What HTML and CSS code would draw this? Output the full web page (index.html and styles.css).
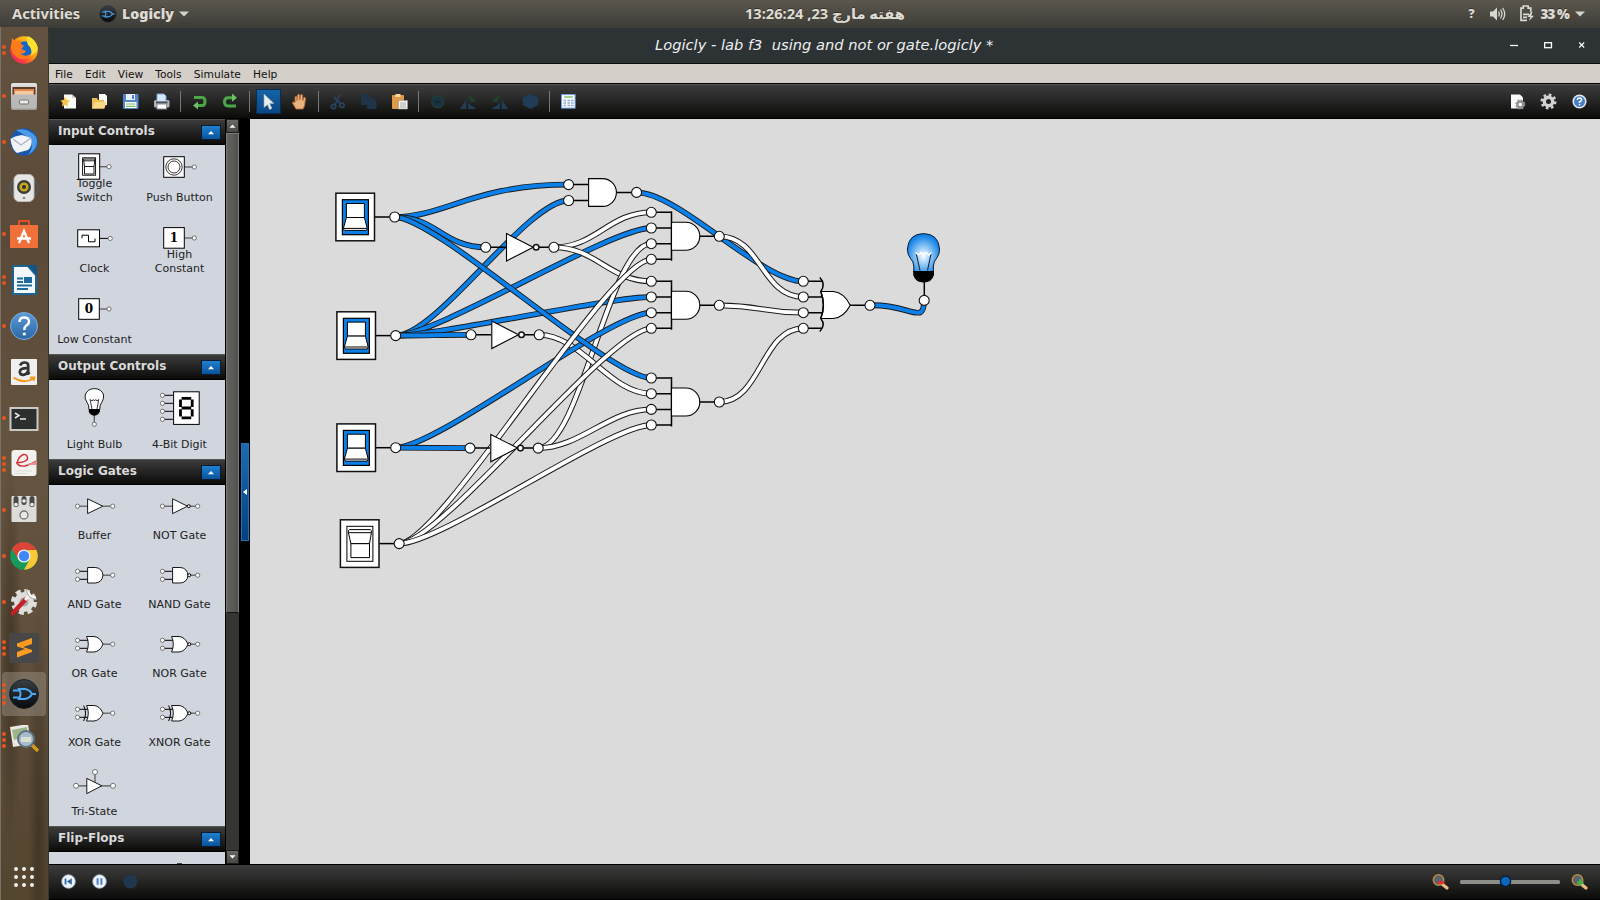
FILE: index.html
```html
<!DOCTYPE html>
<html lang="en">
<head>
<meta charset="utf-8">
<title>Logicly - lab f3  using and not or gate.logicly *</title>
<link rel="stylesheet" href="styles.css">
</head>
<body>
<svg class="defs" width="0" height="0">
  <defs>
    <linearGradient id="gDark" x1="0" y1="0" x2="0" y2="1"><stop offset="0" stop-color="#3b4045"/><stop offset="1" stop-color="#07090c"/></linearGradient>
    <linearGradient id="gFox" x1="1" y1="0" x2="0" y2="1"><stop offset="0" stop-color="#fff23a"/><stop offset=".45" stop-color="#ff980e"/><stop offset=".75" stop-color="#ff3647"/><stop offset="1" stop-color="#e31587"/></linearGradient>
    <linearGradient id="gMetal" x1="0" y1="0" x2="0" y2="1"><stop offset="0" stop-color="#e4e4e2"/><stop offset="1" stop-color="#9a9a98"/></linearGradient>
    <linearGradient id="gSky" x1="0" y1="0" x2="0" y2="1"><stop offset="0" stop-color="#5a9bd8"/><stop offset="1" stop-color="#2b66a4"/></linearGradient>
    <radialGradient id="gBulb" cx=".5" cy=".58" r=".6"><stop offset="0" stop-color="#fff"/><stop offset=".25" stop-color="#b9dcfa"/><stop offset=".85" stop-color="#1a86e8"/><stop offset="1" stop-color="#0a7fe6"/></radialGradient>
    <g id="logo">
      <circle r="14.5" fill="url(#gDark)" stroke="#1b232b"/>
      <path d="M-5-5H1Q6-4 8 0Q6 4 1 5H-5Q-2 0-5-5ZM8 0H12M-11-3.5H-4M-11 3.5H-4" fill="none" stroke="#4aa8f5" stroke-width="2"/>
    </g>
    <g id="toggle">
      <path d="M-20 0H-5" class="ln"/>
      <rect x="-58.8" y="-23.8" width="38.6" height="47.6" class="part"/>
      <rect x="-52.3" y="-17.3" width="26" height="35" class="well"/>
      <path d="M-48.3-13.5h18V.5h-18Z" class="rock"/>
      <path d="M-48.3 .5h18L-27.5 11.3V12L-28.6 13.4H-50L-51.3 12V11.3Z M-51 11.4H-27.8" class="rock"/>
      <circle r="5" class="pin"/>
    </g>
    <g id="toggleOff">
      <path d="M-20 0H-5" class="ln"/>
      <rect x="-58.8" y="-23.8" width="38.6" height="47.6" class="part"/>
      <rect x="-52.3" y="-17.3" width="26" height="35" class="rock"/>
      <path d="M-48.3 0h18.6V14h-18.6Z" class="rock"/>
      <path d="M-48.3 0h18.6L-27.8-10.8V-13L-29-14H-49.5L-50.8-13V-10.8ZM-50.6-10.9H-28" class="rock"/>
      <circle r="5" class="pin"/>
    </g>
    <g id="not">
      <path d="M0 0H20M50 0H68" class="ln"/>
      <path d="M20.8-13.7L47.5 0L20.8 13.7Z" class="thin"/>
      <circle cx="50.5" r="2.8" class="part"/>
      <circle r="5" class="pin"/><circle cx="68.2" r="5" class="pin"/>
    </g>
    <g id="and4">
      <path d="M0-24H20M0-8.3H20M0 7.4H20M0 23H20M20.2-25V24.5M48 0H68" class="ln"/>
      <path d="M20.2-14H34.5A14 14 0 0 1 34.5 14H20.2Z" class="thin"/>
      <circle cy="-24" r="5" class="pin"/><circle cy="-8.3" r="5" class="pin"/><circle cy="7.4" r="5" class="pin"/><circle cy="23" r="5" class="pin"/>
      <circle cx="68" r="5" class="pin"/>
    </g>
    <!-- palette pieces -->
    <g id="in2"><path d="M25.5 21.3H37M25.5 29.3H37" class="ln2"/><circle cx="25.5" cy="21.3" r="2.1" class="dot"/><circle cx="25.5" cy="29.3" r="2.1" class="dot"/></g>
    <g id="out"><path d="M50.5 25.2H60" class="ln3"/><circle cx="60.7" cy="25.2" r="2.1" class="dot"/></g>
    <path id="orBody" d="M34.6 17.5H42Q48 18 51 25.2Q48 32.5 42 33H34.6Q38 25 34.6 17.5Z" class="sh"/>
    <path id="up" d="M-3 1.8L0-1.6L3 1.8Z" fill="#fff"/>
  </defs>
</svg>

<header class="topbar">
  <span class="tb-act">Activities</span>
  <span class="tb-app"><svg width="18" height="18" viewBox="-16 -16 32 32"><use href="#logo"/></svg><b>Logicly</b><svg width="10" height="6" viewBox="0 0 10 6"><path d="M0 .5H10L5 5.5Z" fill="#d5d3cd"/></svg></span>
  <span class="tb-clock" dir="rtl" lang="ur">هفته مارچ 23, 13:26:24</span>
  <span class="tb-sys">
    <b class="q">?</b>
    <svg width="16" height="14" viewBox="0 0 16 14"><path d="M0 4.5H3L7 .5V13.5L3 9.5H0Z" fill="#dad8d2"/><path d="M8.5 4.5Q10 7 8.5 9.5M10.5 2.5Q13.4 7 10.5 11.5M12.7 1Q16.7 7 12.7 13" fill="none" stroke="#dad8d2" stroke-width="1.3"/></svg>
    <svg class="batt" width="15" height="17" viewBox="0 0 15 17"><path d="M7 15.3H1V3.2H3.2V1H8.2V3.2H10.8V7M3 9.3H9M3 12.3H7" fill="none" stroke="#dad8d2" stroke-width="1.7"/><path d="M11 7L7.5 12H10.3L9 16L14 10.8H11.2L12.5 7Z" fill="#dad8d2"/></svg>
    <b class="pct">33 %</b>
    <svg width="10" height="6" viewBox="0 0 10 6"><path d="M0 .5H10L5 5.5Z" fill="#d5d3cd"/></svg>
  </span>
</header>

<div class="desk">
<nav class="dock">
  <div class="app"><i class="pips"><i></i><i></i></i><svg viewBox="-15 -15 30 30"><circle r="13.8" fill="url(#gFox)"/><circle cx="1" cy="-1" r="7.8" fill="#1666c8"/><path d="M-13-3L-12-12L-8-8L-4-10L-3-6L0-4L-3-1L2 1Q0 5-4 3Q0 8 7 4Q2 11-6 8Q-13 4-13-3Z" fill="#ff7a18"/><path d="M4-14Q1-7 6-3Q9 2 6 6Q14 3 13.6-3Q11-11 4-14Z" fill="#ffe02e"/></svg></div>
  <div class="app"><i class="pips"><i></i></i><svg viewBox="-15 -15 30 30"><rect x="-13" y="-13" width="26" height="27" rx="2" fill="url(#gMetal)"/><rect x="-11.5" y="-9" width="23" height="8" fill="#5b3a28"/><path d="M-10-7H10V-1H-10Z" fill="#e08a50"/><path d="M-9-5H9V-1H-9Z" fill="#f3c9a0"/><rect x="-12" y="-1.5" width="24" height="14" fill="#b9b9b7"/><rect x="-4.5" y="4" width="9" height="4" rx="1" fill="#e8e8e6" stroke="#777"/></svg></div>
  <div class="app"><i class="pips"><i></i></i><svg viewBox="-15 -15 30 30"><circle r="13.8" fill="#1b58ad"/><path d="M-8-12Q4-15 12-5Q16 6 4 13Q12 2 4-4Q-2-9-8-12Z" fill="#4a9be8"/><path d="M-13.5-3Q-10-6-2-7L7-4Q9 4 4 8L-7 11Q-12 8-13.5-3Z" fill="#f2f4f7"/><path d="M-11-3L-3 3L7-4" fill="none" stroke="#a9b4c4" stroke-width="1.3"/></svg></div>
  <div class="app"><svg viewBox="-15 -15 30 30"><path d="M-12-7Q-16 0-12 7M12-7Q16 0 12 7" stroke="#4b5962" stroke-width="2" fill="none"/><rect x="-10" y="-13.5" width="20" height="27" rx="5" fill="#e6e6e2" stroke="#bbb"/><circle cy="-1" r="7" fill="#3b3b38"/><circle cy="-1" r="4.6" fill="#c9a81e"/><circle cy="-1" r="2" fill="#2d2d2b"/><circle cy="10" r="1.3" fill="#888"/></svg></div>
  <div class="app"><i class="pips"><i></i></i><svg viewBox="-15 -15 30 30"><path d="M-5-9V-13H5V-9" fill="none" stroke="#e04f28" stroke-width="2"/><path d="M-14-9H14V13Q14 14 13 14H-13Q-14 14-14 13Z" fill="#f0703a"/><path d="M-5 9L0-3L5 9M-7 4.5H7" fill="none" stroke="#fff" stroke-width="2.3"/></svg></div>
  <div class="app"><i class="pips"><i></i><i></i></i><svg viewBox="-15 -15 30 30"><path d="M-11-14H4L12-5V14H-11Z" fill="#f5f8fa" stroke="#1a6496" stroke-width="2"/><path d="M4-15H13V-5Z" fill="#0f5484"/><path d="M-7-1.5H-1M-7 2H-1M-7 5.5H8M-7 9H4" stroke="#1d6a9c" stroke-width="1.8"/><rect x="0" y="-3" width="8" height="6" fill="#1d6a9c"/></svg></div>
  <div class="app"><i class="pips"><i></i></i><svg viewBox="-15 -15 30 30"><circle r="13.5" fill="url(#gSky)" stroke="#7aaede"/><path d="M-4.5-4Q-4.5-8.5 0-8.5Q5-8.5 5-4.5Q5-2 2-.2Q.3 1 .3 4" fill="none" stroke="#fff" stroke-width="2.4"/><circle cx=".3" cy="8" r="1.6" fill="#fff"/></svg></div>
  <div class="app"><svg viewBox="-15 -15 30 30"><rect x="-13" y="-13" width="26" height="26" rx="1" fill="#efefef"/><path d="M-3.8-6.5Q-2.8-9.7 1-9.5Q4.5-9.3 4.2-6V-.5Q4.3 1 5.5 2.2M3.6-3.8Q-4.3-4-4.2-.2Q-3.9 3-.7 2.8Q2.8 2.6 4-.8" fill="none" stroke="#333" stroke-width="2.7"/><path d="M-10.5 5.5Q0 12.5 9.5 6.5M6 5.5H10.5L9.5 9" fill="none" stroke="#f79a1c" stroke-width="1.8"/></svg></div>
  <div class="app"><i class="pips"><i></i></i><svg viewBox="-15 -16 30 30"><rect x="-13.5" y="-11" width="27" height="22" fill="#2c2f2e" stroke="#c9c9c5" stroke-width="2"/><path d="M-9-6L-5-3.5L-9-1M-4 0H2" fill="none" stroke="#e8e8e8" stroke-width="1.5"/></svg></div>
  <div class="app"><i class="pips"><i></i><i></i><i></i></i><svg viewBox="-15 -15 30 30"><rect x="-12.5" y="-14" width="25" height="26" rx="3" fill="#f3f2ef"/><path d="M-8-1Q6-2 3-8Q0-12-5-6Q-10 3 1 2Q8 0 12-3" fill="none" stroke="#d8232a" stroke-width="1.4"/><path d="M-3 2Q6 0 12-3V1Q4 0-3 2Z" fill="#f08a8c"/><path d="M-9 7H8M-9 9.5H3" stroke="#ddd"/></svg></div>
  <div class="app"><i class="pips"><i></i></i><svg viewBox="-15 -15 30 30"><rect x="-12.5" y="-14" width="25" height="26" rx="1" fill="#dcdcd8"/><g fill="#4a4a48"><rect x="-10.5" y="-14" width="5" height="11" rx="2.5"/><rect x="-2.5" y="-14" width="5" height="9" rx="2.5"/><rect x="5.5" y="-14" width="5" height="11" rx="2.5"/></g><g fill="#eee"><circle cx="-8" cy="-5.5" r="1.8"/><circle cy="-9" r="1.8"/><circle cx="8" cy="-5.5" r="1.8"/></g><circle cy="5" r="4" fill="#e8e8e6" stroke="#777" stroke-width="1.3"/></svg></div>
  <div class="app"><i class="pips"><i></i></i><svg viewBox="-15 -15 30 30"><circle r="13.8" fill="#159a5b"/><path d="M-12-7A13.8 13.8 0 0 1 12.4-6H0L-6 3Z" fill="#db4437"/><path d="M12.4-6A13.8 13.8 0 0 1 0 13.8L6 3L4-6Z" fill="#fcc934"/><circle r="6.6" fill="#f1f1f1"/><circle r="5.2" fill="#4285f4"/></svg></div>
  <div class="app"><i class="pips"><i></i></i><svg viewBox="-15 -15 30 30"><circle r="10" fill="#deddda"/><circle r="11" fill="none" stroke="#deddda" stroke-width="4" stroke-dasharray="5 3.64"/><circle r="4.5" fill="#aaa9a6"/><path d="M-11 11L1-2" stroke="#c3202a" stroke-width="4.5" stroke-linecap="round"/><path d="M1-2L6-7M4-11Q5-4 12-4" stroke="#f4f4f2" stroke-width="3" fill="none"/><path d="M2.5-12Q3.5-3 13-2.5" stroke="#999" stroke-width=".8" fill="none"/></svg></div>
  <div class="app"><i class="pips"><i></i><i></i><i></i></i><svg viewBox="-15 -15 30 30"><rect x="-15" y="-15" width="30" height="30" rx="2" fill="#474747"/><path d="M-7-4.5L8-10V-4L-1-1L8 2V4L-7 9.5V4L1 1L-7-1.5Z" fill="#ff9b21"/></svg></div>
  <div class="app active"><i class="pips"><i></i><i></i><i></i><i></i></i><svg viewBox="-15 -15 30 30"><use href="#logo"/></svg></div>
  <div class="app"><i class="pips"><i></i><i></i><i></i></i><svg viewBox="-15 -13 30 30"><path d="M-14-11L4-14L7 6L-11 9Z" fill="#e9e9e4"/><path d="M-12-8L3-11L4-3L-10 2Z" fill="#9db489"/><path d="M8 7L14 13" stroke="#d29a1d" stroke-width="3.5"/><circle cx="2" cy="1" r="8" fill="#a7bccb" stroke="#5f7180" stroke-width="2"/><path d="M-3-1H7V4H-3Z" fill="#d8e0d0"/></svg></div>
  <div class="grid-btn"><i></i><i></i><i></i><i></i><i></i><i></i><i></i><i></i><i></i></div>
</nav>

<main class="window">
  <div class="title"><span class="title-text">Logicly - lab f3  using and not or gate.logicly *</span>
    <svg class="wm" width="80" height="12" viewBox="0 0 80 12"><path d="M1 6.5H9" stroke="#fff" stroke-width="1.3"/><rect x="35.7" y="3.7" width="6.8" height="5" fill="none" stroke="#fff" stroke-width="1.3"/><path d="M70.2 3.5L75.2 8.5M75.2 3.5L70.2 8.5" stroke="#fff" stroke-width="1.1"/></svg>
  </div>
  <div class="menu"><span>File</span><span>Edit</span><span>View</span><span>Tools</span><span>Simulate</span><span>Help</span></div>
  <div class="toolbar">
    <svg class="t" viewBox="0 0 25 25"><path d="M8 5.5H16L20 9V19.5H8Z" fill="#fbfbf6"/><path d="M16 5.5V9H20Z" fill="#d0d0c8"/><path d="M9 7.5L10.5 11L14 11.5L11.5 14L12 17.5L9 15.8L6 17.5L6.5 14L4.5 11.5L7.5 11Z" fill="#f5c242"/></svg>
    <svg class="t" viewBox="0 0 25 25"><path d="M12 5H18L20 7V16H12Z" fill="#fbfbf6"/><path d="M5 9H10L11 11H17V19.5H5Z" fill="#eebc55"/><path d="M5 19.5L8 13H19.5L17.5 19.5Z" fill="#f8d988"/></svg>
    <svg class="t" viewBox="0 0 25 25"><rect x="5" y="5" width="15.5" height="15" rx="1" fill="#5284c8"/><rect x="8" y="5" width="9" height="6" fill="#e6eefa"/><rect x="14" y="6" width="2" height="4" fill="#5284c8"/><rect x="7" y="13" width="11.5" height="6" fill="#fff"/><path d="M8 15H17.5M8 17.3H17.5" stroke="#7dbb6c" stroke-width="1.2"/></svg>
    <svg class="t" viewBox="0 0 25 25"><rect x="5" y="11" width="15.5" height="7.5" rx="1.5" fill="#aeb4ba"/><path d="M8 5H15L17 7V13H8Z" fill="#d4e8fb" stroke="#7fa9d6"/><rect x="7" y="12.5" width="11.5" height="2" fill="#4d5358"/><rect x="8" y="15" width="9.5" height="5" fill="#fff" stroke="#8a8f94"/></svg>
    <i class="sep"></i>
    <svg class="t" viewBox="0 0 25 25"><path d="M7 8.5H15Q18 8.5 18 12.5Q18 16.5 15 16.5H10" fill="none" stroke="#4ba648" stroke-width="3"/><path d="M11 12.5V20.5L6 16.5Z" fill="#6cc265"/></svg>
    <svg class="t" viewBox="0 0 25 25"><path d="M18 17H10Q6.5 17 6.5 12.8Q6.5 8.7 10 8.7H15" fill="none" stroke="#4ba648" stroke-width="3"/><path d="M14 4.5V12.8L19 8.7Z" fill="#6cc265"/></svg>
    <i class="sep"></i>
    <svg class="t sel" viewBox="0 0 25 25"><path d="M8 5L18 14.5H13.7L16 19.5L13.5 20.5L11.5 15.7L8 18.5Z" fill="#e9edf1" stroke="#9aa7b4" stroke-width=".6"/></svg>
    <svg class="t" viewBox="0 0 25 25"><path d="M9 20L5.5 14Q5.5 12 8 13.5L8 8Q9 6.5 10 8V11.5L10.5 6Q11.7 4.5 12.7 6V11L13.7 5.8Q15 4.7 15.7 6.4V11.5L17 8.4Q18.5 7.8 18.6 9.4L17.5 17L16 20Z" fill="#e9b27c" stroke="#b06a35" stroke-width=".9"/></svg>
    <i class="sep"></i>
    <svg class="t" viewBox="0 0 25 25"><path d="M15 5L10 16M9 8L16 15" stroke="#28445e" stroke-width="1.8"/><circle cx="8.5" cy="17.5" r="2.2" fill="none" stroke="#28445e" stroke-width="1.7"/><circle cx="17" cy="16.3" r="2.2" fill="none" stroke="#28445e" stroke-width="1.7"/></svg>
    <svg class="t" viewBox="0 0 25 25"><path d="M5 5H11L14 8V9H17L20.5 12V20H11V16H5Z" fill="#1f3446"/></svg>
    <svg class="t" viewBox="0 0 25 25"><rect x="5" y="6" width="12" height="14" rx="1" fill="#e09a48"/><rect x="8.5" y="5" width="5" height="3" fill="#f6d9a0"/><rect x="11.5" y="11.5" width="9" height="8.5" fill="#f4f4f2" stroke="#999" stroke-width=".6"/><path d="M13 14H19M13 16H19M13 18H19" stroke="#aaa"/></svg>
    <i class="sep"></i>
    <svg class="t" viewBox="0 0 25 25"><circle cx="12.7" cy="12.8" r="6" fill="#1c3244" stroke="#1d3f30" stroke-width="1.5"/><path d="M9.5 12.8H16" stroke="#16242e" stroke-width="2"/></svg>
    <svg class="t" viewBox="0 0 25 25"><path d="M4 20L10.5 10V20ZM12 20V14L20.5 20Z" fill="#213c54"/><path d="M10 10Q14 4 19 11L19.5 13H14V10.5Q12 9 10 10Z" fill="#20402a"/></svg>
    <svg class="t" viewBox="0 0 25 25"><path d="M21 20L14.5 10V20ZM13 20V14L4.5 20Z" fill="#213c54"/><path d="M15 10Q11 4 6 11L5.5 13H11V10.5Q13 9 15 10Z" fill="#20402a"/></svg>
    <svg class="t" viewBox="0 0 25 25"><path d="M9.5 6.5Q12.5 4 15.5 6.5L20.5 8.5L20 16L12.5 20L5 16L4.5 8.5Z" fill="#213d56"/></svg>
    <i class="sep"></i>
    <svg class="t" viewBox="0 0 25 25"><rect x="5.6" y="5.6" width="13.5" height="13.5" fill="#fff" stroke="#6f9fe0"/><path d="M8 8H17" stroke="#6dbb5c" stroke-width="1.3"/><path d="M7.5 11.5H10M11.5 11.5H14M15 11.5H17.5M7.5 14H10M11.5 14H14M15 14H17.5M7.5 16.5H10M11.5 16.5H14M15 16.5H17.5" stroke="#86a9d8" stroke-width="1.4"/></svg>
    <i class="grow"></i>
    <svg class="t" viewBox="0 0 25 25"><path d="M6 5.5H15L18 8.5V19.5H6Z" fill="#fafafa"/><circle cx="15.3" cy="15.5" r="3" fill="none" stroke="#8f9294" stroke-width="2.4"/><circle cx="15.3" cy="15.5" r="4.3" fill="none" stroke="#8f9294" stroke-width="1.5" stroke-dasharray="1.7 1.68"/></svg>
    <svg class="t" viewBox="0 0 25 25"><circle cx="12.5" cy="12.5" r="4.2" fill="none" stroke="#d2d4d4" stroke-width="3.4"/><circle cx="12.5" cy="12.5" r="6.8" fill="none" stroke="#d2d4d4" stroke-width="2.4" stroke-dasharray="2.7 2.64"/></svg>
    <svg class="t" viewBox="0 0 25 25"><circle cx="12.5" cy="12.5" r="6.3" fill="#4a80c6" stroke="#e3ecf7" stroke-width="1.5"/><path d="M10.4 11Q10.6 9 12.6 9Q14.7 9.1 14.6 10.8Q14.5 12 12.5 13V14" fill="none" stroke="#fff" stroke-width="1.5"/><rect x="11.8" y="15" width="1.5" height="1.4" fill="#fff"/></svg>
  </div>

  <div class="work">
    <aside class="side">
      <h2><span>Input Controls</span><svg class="fold" viewBox="-9 -6.5 18 13"><use href="#up"/></svg></h2>
      <div class="pal input">
        <div class="it"><svg viewBox="0 0 85 69"><path d="M48 23.7H57" class="ln3"/><rect x="26.7" y="10.8" width="21" height="25.4" class="bx"/><rect x="30.6" y="14.8" width="13" height="17.4" class="sh"/><path d="M31.5 16H43L42 23.5V31H32.5V23.5ZM32.5 23.5H42M31.5 17.8H43" class="sh"/><circle cx="57" cy="23.7" r="2.1" class="dot"/></svg><b>Toggle<br>Switch</b></div>
        <div class="it"><svg viewBox="0 0 85 69"><path d="M48 24H57" class="ln3"/><rect x="26.7" y="13.7" width="20.6" height="20.6" class="bx"/><circle cx="37" cy="24" r="8.2" fill="#fff" stroke="#222" stroke-width=".9"/><circle cx="37" cy="24" r="6" fill="#fff" stroke="#222" stroke-width=".9"/><circle cx="57.3" cy="24" r="2.1" class="dot"/></svg><b>Push Button</b></div>
        <div class="it"><svg viewBox="0 0 85 69"><path d="M48 24.4H58" class="ln2"/><rect x="25.7" y="15.8" width="21.8" height="17" class="bx"/><path d="M30 24.2V21.2H36.5V27.8H43V24.5" fill="none" stroke="#000" stroke-width="1"/><circle cx="58.2" cy="24.4" r="2.1" class="dot"/></svg><b>Clock</b></div>
        <div class="it"><svg viewBox="0 0 85 69"><path d="M48 24H57" class="ln3"/><rect x="26.7" y="13.6" width="20.6" height="20.6" class="bx"/><text x="37" y="28.3" class="cst">1</text><circle cx="57.3" cy="24" r="2.1" class="dot"/></svg><b>High<br>Constant</b></div>
        <div class="it"><svg viewBox="0 0 85 69"><path d="M48 24H57" class="ln3"/><rect x="26.7" y="13.7" width="20.6" height="20.6" class="bx"/><text x="37" y="28.3" class="cst">0</text><circle cx="57" cy="24" r="2.1" class="dot"/></svg><b>Low Constant</b></div>
      </div>
      <h2><span>Output Controls</span><svg class="fold" viewBox="-9 -6.5 18 13"><use href="#up"/></svg></h2>
      <div class="pal output">
        <div class="it"><svg viewBox="0 0 85 69"><path d="M42.3 25V32" class="ln3"/><path d="M37 19.5Q37 14.5 35 12.3Q32.5 9 33.2 5Q35.5-1.3 42.3-1.4Q49.5-1.3 51.6 5Q52 9 49.8 12.3Q47.7 14.5 47.7 19.5Z" class="sh"/><path d="M36.8 19H47.9V21.5Q46.5 25.5 42.3 25.7Q38 25.5 36.8 21.5Z" fill="#000"/><path d="M40 19L38 9.5L40 11L41.3 9.5L42.5 11L43.8 9.5L45 11L46.8 9.5L45 19" fill="none" stroke="#222" stroke-width=".9"/><circle cx="42.3" cy="34.3" r="2.1" class="dot"/></svg><b>Light Bulb</b></div>
        <div class="it"><svg viewBox="0 0 85 69"><path d="M25.5 5.3H36M25.5 13.3H36M25.5 21.3H36M25.5 29.3H36" class="ln2"/><rect x="36.6" y="1.8" width="25.6" height="32.6" class="bx"/><path d="M44.6 8.3H54.2M44.6 18H54.2M44.6 27.8H54.2" stroke="#000" stroke-width="2.8"/><path d="M43.5 9.5V17M55.2 9.5V17M43.5 19.3V26.6M55.2 19.3V26.6" stroke="#000" stroke-width="2.8"/><circle cx="25.5" cy="5.3" r="2.1" class="dot"/><circle cx="25.5" cy="13.3" r="2.1" class="dot"/><circle cx="25.5" cy="21.3" r="2.1" class="dot"/><circle cx="25.5" cy="29.3" r="2.1" class="dot"/></svg><b>4-Bit Digit</b></div>
      </div>
      <h2><span>Logic Gates</span><svg class="fold" viewBox="-9 -6.5 18 13"><use href="#up"/></svg></h2>
      <div class="pal logic">
        <div class="it"><svg viewBox="0 0 85 69"><path d="M25.5 25.2H36" class="ln3"/><use href="#out"/><path d="M35.6 17.8L50.8 25.2L35.6 32.6Z" class="sh"/><circle cx="25.5" cy="25.2" r="2.1" class="dot"/></svg><b>Buffer</b></div>
        <div class="it"><svg viewBox="0 0 85 69"><path d="M25.5 25.2H36" class="ln3"/><use href="#out"/><path d="M35.6 17.8L50.5 25.2L35.6 32.6Z" class="sh"/><circle cx="51.8" cy="25.2" r="1.5" class="bub"/><circle cx="25.5" cy="25.2" r="2.1" class="dot"/></svg><b>NOT Gate</b></div>
        <div class="it"><svg viewBox="0 0 85 69"><use href="#in2"/><use href="#out"/><path d="M35.6 17.5H43.2A7.7 7.7 0 0 1 43.2 33H35.6Z" class="sh"/></svg><b>AND Gate</b></div>
        <div class="it"><svg viewBox="0 0 85 69"><use href="#in2"/><use href="#out"/><path d="M35.6 17.5H43.2A7.7 7.7 0 0 1 43.2 33H35.6Z" class="sh"/><circle cx="52.3" cy="25.2" r="1.5" class="bub"/></svg><b>NAND Gate</b></div>
        <div class="it"><svg viewBox="0 0 85 69"><use href="#in2"/><use href="#out"/><use href="#orBody"/></svg><b>OR Gate</b></div>
        <div class="it"><svg viewBox="0 0 85 69"><use href="#in2"/><use href="#out"/><use href="#orBody"/><circle cx="52.3" cy="25.2" r="1.5" class="bub"/></svg><b>NOR Gate</b></div>
        <div class="it"><svg viewBox="0 0 85 69"><use href="#in2"/><use href="#out"/><use href="#orBody"/><path d="M31.6 17.5Q35.5 25 31.6 33" class="arc"/></svg><b>XOR Gate</b></div>
        <div class="it"><svg viewBox="0 0 85 69"><use href="#in2"/><use href="#out"/><use href="#orBody"/><path d="M31.6 17.5Q35.5 25 31.6 33" class="arc"/><circle cx="52.3" cy="25.2" r="1.5" class="bub"/></svg><b>XNOR Gate</b></div>
        <div class="it"><svg viewBox="0 0 85 69"><path d="M24 28.8H61M43 15V26" class="ln3"/><path d="M34.8 21.4L49.8 28.8L34.8 36.6Z" class="sh"/><circle cx="24" cy="28.8" r="2.5" class="dot"/><circle cx="61" cy="28.8" r="2.5" class="dot"/><circle cx="43" cy="15" r="2.5" class="dot"/></svg><b>Tri-State</b></div>
      </div>
      <h2><span>Flip-Flops</span><svg class="fold" viewBox="-9 -6.5 18 13"><use href="#up"/></svg></h2>
      <div class="pal flip"><i></i></div>
    </aside>
    <div class="scroll">
      <svg class="sb" viewBox="-6.5 -7 13 14"><use href="#up"/></svg>
      <i class="thumb"></i><i class="grow"></i>
      <svg class="sb" viewBox="-6.5 -7 13 14"><use href="#up" transform="scale(1 -1)"/></svg>
    </div>
    <div class="split"><svg viewBox="0 0 8 98"><path d="M2 49L6 46V52Z" fill="#fff"/></svg></div>
    <svg class="canvas" viewBox="250 119 1350 745">
      <g id="wires"></g>
      <use href="#toggle" x="394.7" y="217"/>
      <use href="#toggle" x="395.7" y="335.6"/>
      <use href="#toggle" x="395.7" y="447.7"/>
      <use href="#toggleOff" x="399.2" y="543.6"/>
      <use href="#not" x="485.7" y="247.3"/>
      <use href="#not" x="471" y="334.8"/>
      <use href="#not" x="470" y="448.1"/>
      <g>
        <path d="M568.6 184.6H588M568.6 200.5H588M617 192.4H637" class="ln"/>
        <path d="M588.6 178.6H602.5A13.9 13.9 0 0 1 602.5 206.4H588.6Z" class="thin"/>
        <circle cx="568.6" cy="184.6" r="5" class="pin"/><circle cx="568.6" cy="200.5" r="5" class="pin"/><circle cx="636.6" cy="192.4" r="5" class="pin"/>
      </g>
      <use href="#and4" x="651.3" y="236.3"/>
      <use href="#and4" x="651.3" y="305.3"/>
      <use href="#and4" x="651.3" y="402"/>
      <g>
        <path d="M803 281.3H822M803 297H822M803 312.7H822M803 328.3H822M850 305.3H870" class="ln"/>
        <path d="M820.8 291.5H833.5Q844 292.5 850.2 305.3Q844 317.5 833.5 318.5H820.8Q826.3 305 820.8 291.5Z" class="thin"/>
        <path d="M819.8 277.5Q826 284 820.8 291.5Q825.8 305 820.8 318.5Q826 325 819.8 331.5" class="ln" fill="none"/>
        <circle cx="803.3" cy="281.3" r="5" class="pin"/><circle cx="803.3" cy="297" r="5" class="pin"/><circle cx="803.3" cy="312.7" r="5" class="pin"/><circle cx="803.3" cy="328.3" r="5" class="pin"/><circle cx="870" cy="305.3" r="5" class="pin"/>
      </g>
      <g>
        <path d="M924.3 280V296" class="ln"/>
        <path d="M913.8 272V266Q913.5 261.5 910.5 258.5Q907.3 254.5 907.4 249Q908.5 234 923.5 233.6Q938.5 234 939.6 249Q939.6 254.5 936.5 258.5Q933.6 261.5 933.4 266V272Z" fill="url(#gBulb)" stroke="#0b1f33" stroke-width="1"/>
        <path d="M913.2 271H934V275Q932 282.3 923.6 282.6Q915.2 282.3 913.2 275Z" fill="#000"/>
        <path d="M920 270.5L916.3 254M927.5 270.5L931 254" stroke="#16283a" stroke-width="1.1"/>
        <path d="M915.7 252.5L918.5 255L921 252.5L923.7 255L926.3 252.5L929 255L931.5 252.5" fill="none" stroke="#fff" stroke-width="1.5"/>
        <circle cx="924.2" cy="300.4" r="5" class="pin"/>
      </g>
    </svg>
  </div>

  <footer class="foot">
    <svg class="t" viewBox="0 0 25 25"><circle cx="12.5" cy="12.5" r="6.8" fill="#eef3f9" stroke="#9db8d8" stroke-width=".8"/><path d="M9.5 9.5V15.5" stroke="#2f66a8" stroke-width="1.8"/><path d="M15.8 9.2V15.8L10.8 12.5Z" fill="#2f66a8"/></svg>
    <svg class="t" viewBox="0 0 25 25"><circle cx="12.5" cy="12.5" r="6.8" fill="#eef3f9" stroke="#9db8d8" stroke-width=".8"/><path d="M10.6 9.3V15.7M14.4 9.3V15.7" stroke="#4a80c4" stroke-width="2"/></svg>
    <svg class="t" viewBox="0 0 25 25"><circle cx="12.5" cy="12.5" r="7" fill="#20384d"/></svg>
    <i class="grow"></i>
    <svg class="t" viewBox="0 0 25 25"><path d="M15 15L20 19" stroke="#e9b988" stroke-width="3.3" stroke-linecap="round"/><circle cx="11.5" cy="11" r="5.2" fill="#59636b" stroke="#b98a45" stroke-width="1.5"/><path d="M11 13.6H17.5" stroke="#f02c30" stroke-width="2.6"/></svg>
    <svg class="slider" width="104" height="20" viewBox="0 0 104 20"><rect x="2" y="9" width="100" height="4" rx="1.5" fill="#8e8e88"/><circle cx="47.5" cy="10.3" r="5.2" fill="#0b67b8" stroke="#06153a" stroke-width="1.2"/></svg>
    <svg class="t" viewBox="0 0 25 25"><path d="M15 15L20 19" stroke="#e9b988" stroke-width="3.3" stroke-linecap="round"/><circle cx="11.5" cy="11" r="5.2" fill="#59636b" stroke="#b98a45" stroke-width="1.5"/><path d="M11 13.6H17.6M14.3 10.3V17" stroke="#4cb04a" stroke-width="2.4"/></svg>
  </footer>
</main>
</div>
<script src="app.js"></script>
</body>
</html>
```
FILE: styles.css
```css
* { box-sizing: border-box; }
body { margin: 0; width: 1600px; height: 900px; overflow: hidden; background: #000; font-family: "DejaVu Sans", sans-serif; display: flex; flex-direction: column; }
svg { display: block; flex: none; }
.defs { position: absolute; }
.grow { flex: 1; }

.topbar { flex: none; height: 28px; background: linear-gradient(#5b574d, #3d3c37); color: #dfdbd2; font: bold 14.5px/26px "Noto Sans", "Open Sans", sans-serif; display: grid; grid-template-columns: 98px 647px 1fr auto; padding: 0 14px 1px 12px; text-shadow: 0 -1px 0 rgba(0,0,0,.35); }
.tb-act { font-size: 14.7px; }
.tb-app { display: flex; align-items: center; gap: 5px; margin-left: -11px; }
.tb-app b { font-size: 14.2px; }
.tb-clock { justify-self: start; margin-left: -12px; font-size: 14.65px; white-space: nowrap; font-family: "Noto Sans", "DejaVu Sans", sans-serif; }
.tb-sys { display: flex; align-items: center; }
.q { font-size: 12px; margin-right: 16px; }
.batt { margin: 0 5px 0 14px; }
.pct { font-size: 13.5px; letter-spacing: -.9px; margin-right: 6px; }
.tb-sys svg:last-child { margin-right: 1px; }

.desk { flex: 1; display: flex; min-height: 0; }
.dock { flex: none; width: 49px; margin-top: -1px; border-left: 1px solid #77736b; border-right: 1px solid #3c3329; background: radial-gradient(ellipse at 20% 72%, rgba(50,38,25,.6), transparent 22%), radial-gradient(ellipse at 80% 92%, rgba(45,36,26,.5), transparent 20%), linear-gradient(#62523f, #5b4a38 25%, #65543f 50%, #5e4e3b 75%, #54452f); display: flex; flex-direction: column; z-index: 1; }
.app { height: 46px; display: grid; grid-template-columns: 6px 34px; align-items: center; flex: none; }
.app > svg { grid-column: 2; width: 30px; height: 30px; margin-left: 2px; }
.app.active { background: rgba(160,150,138,.45); border-radius: 4px; margin: 1px 2px 1px 1px; height: 44px; grid-template-columns: 5px 34px; }
.pips { grid-column: 1; display: flex; flex-direction: column; gap: 2px; margin-left: 1px; }
.active .pips { margin-left: 0; }
.pips i { width: 4px; height: 4px; border-radius: 2px; background: #e95420; }
.grid-btn { margin: auto 0 13px 13px; display: grid; grid-template-columns: repeat(3, 4px); gap: 4px; }
.grid-btn i { width: 4px; height: 4px; border-radius: 2px; background: #f2f1ee; }

.window { flex: 1; display: flex; flex-direction: column; min-width: 0; }
.title { height: 36px; background: #2d3235; border-bottom: 1px solid #0b0c0d; display: grid; grid-template-columns: 1fr auto; align-items: center; color: #eceff0; }
.title-text { white-space: pre; font-size: 14.667px; font-style: italic; margin: -1px 0 0 606px; line-height: 20px; }
.wm { margin: -2px 11px 0 0; }
.menu { height: 20px; background: #d4cfc8; border-bottom: 1px solid #000; display: flex; font-size: 10.667px; line-height: 22px; color: #111; padding-left: 6px; gap: 12.2px; }
.toolbar, .foot { flex: none; height: 35px; background: linear-gradient(#3d3d3d, #0b0b0a); border-top: 1px solid #555; border-bottom: 1px solid #000; display: flex; align-items: center; gap: 6px; padding: 0 8px 1px 7px; }
.t { width: 25px; height: 25px; }
.sel { background: linear-gradient(#1565a8, #0a4682); outline: 1px solid #062c52; outline-offset: -1px; }
.sep { width: 1px; height: 21px; background: #77777a; }

.work { flex: 1; display: flex; min-height: 0; }
.side { width: 176px; flex: none; overflow: hidden; background: #d1d6de; }
h2 { margin: 0; height: 26px; border-top: 1px solid #555; border-bottom: 1px solid #000; background: linear-gradient(#3b3b3b, #0b0b0a); color: #dadada; font: bold 12px/22px "DejaVu Sans", sans-serif; display: flex; justify-content: space-between; align-items: center; padding: 0 4px 0 9px; }
h2 span { padding-bottom: 2px; }
.fold { width: 20px; height: 15px; border: 1px solid #061b30; background: linear-gradient(#1e80d0, #0a549c); }
.pal { display: grid; grid-template-columns: 85px 85px; padding-left: 3px; align-content: end; }
.input { height: 209px; grid-auto-rows: 71px; }
.output { height: 79px; grid-auto-rows: 69px; }
.logic { height: 341px; grid-auto-rows: 69px; }
.flip { height: 12px; justify-content: start; }
.flip i { grid-column: 2; width: 5px; height: 1px; background: #444; margin-left: 40px; }
.it { display: grid; align-items: end; justify-items: center; }
.it > * { grid-area: 1 / 1; }
.it svg { width: 85px; height: 69px; overflow: visible; z-index: 1; }
.it b { font: 11px/14px "DejaVu Sans", sans-serif; color: #222; text-align: center; padding-bottom: 7px; z-index: 0; }

.scroll { width: 14px; flex: none; background: #353532; border-left: 1px solid #000; display: flex; flex-direction: column; }
.sb { width: 13px; height: 14px; background: linear-gradient(#6c6c68, #454542); outline: 1px solid #1c1c1a; outline-offset: -1px; }
.thumb { height: 480px; background: linear-gradient(90deg, #62645e, #50514c); border: 1px solid #7a7b76; border-bottom-color: #111; }
.split { width: 11px; flex: none; background: #000; display: flex; padding: 324px 0 0 2px; }
.split svg { width: 8px; height: 98px; background: linear-gradient(#1d6bb2, #04417f); outline: 1px solid #2672b5; outline-offset: -1px; }
.canvas { width: 1350px; height: 745px; background: #dbdbdb; }
.foot { height: 36px; border-top: 1px solid #000; padding: 0 9.5px 2px 7px; }
.slider { margin: 0 -2px 0 0; }

.ln { stroke: #000; stroke-width: 1.5; fill: none; }
.part { fill: #fff; stroke: #111; stroke-width: 1.5; }
.thin { fill: #fff; stroke: #000; stroke-width: 1.1; }
.well { fill: #0a7fe6; stroke: #000; stroke-width: 1.2; }
.rock { fill: #fff; stroke: #000; stroke-width: 1; }
.pin { fill: #fff; stroke: #111; stroke-width: 1.1; }
.edge { fill: none; stroke: #1a1a1a; stroke-width: 5.8; }
.hot { fill: none; stroke: #0a80e8; stroke-width: 4; }
.cold { fill: none; stroke: #fff; stroke-width: 3.8; }

.ln2 { stroke: #000; stroke-width: 1; fill: none; }
.ln3 { stroke: #555; stroke-width: 1.2; fill: none; }
.dot { fill: #fff; stroke: #555; stroke-width: .8; }
.sh { fill: #fff; stroke: #000; stroke-width: .9; }
.arc { fill: none; stroke: #000; stroke-width: 1; }
.bub { fill: #fff; stroke: #000; stroke-width: 1; }
.bx { fill: #fff; stroke: #000; stroke-width: 1; }
.cst { font: bold 12px "DejaVu Serif", serif; text-anchor: middle; }
```
FILE: app.js
```javascript
// Each wire: start, end, powered, optional handle lengths at start and end.
const H = 42;
const wires = [
  [394.7, 217, 568.6, 184.6, 1, 50, 95],
  [394.7, 217, 485.7, 247.3, 1],
  [395.7, 335.6, 568.6, 200.5, 1],
  [395.7, 335.6, 651.3, 228, 1],
  [395.7, 335.6, 651.3, 297, 1],
  [395.7, 335.6, 471, 334.8, 1],
  [554, 247.3, 651.3, 212.3, 0],
  [554, 247.3, 651.3, 281.3, 0],
  [538.2, 448.1, 651.3, 243.7, 0],
  [539.2, 334.8, 651.3, 393.7, 0],
  [395.7, 447.7, 651.3, 312.7, 1],
  [395.7, 447.7, 470, 448.1, 1],
  [394.7, 217, 651.3, 378, 1],
  [538.2, 448.1, 651.3, 409.4, 0],
  [399.2, 543.6, 651.3, 259.3, 0],
  [399.2, 543.6, 651.3, 328.3, 0],
  [399.2, 543.6, 651.3, 425, 0],
  [636.6, 192.4, 803.3, 281.3, 1],
  [719.3, 236.3, 803.3, 297, 0],
  [719.3, 305.3, 803.3, 312.7, 0],
  [719.3, 402, 803.3, 328.3, 0]
];
const paths = wires.map(([x1, y1, x2, y2, on, a = H, b = H]) =>
  [`M${x1} ${y1}C${x1 + a} ${y1} ${x2 - b} ${y2} ${x2} ${y2}`, on]);
paths.push(["M870 305.3C910 304 924 326 924 300.5", 1]);
document.getElementById("wires").innerHTML = paths.map(([d, on]) =>
  `<path class="edge" d="${d}"/><path class="${on ? "hot" : "cold"}" d="${d}"/>`).join("");
```
